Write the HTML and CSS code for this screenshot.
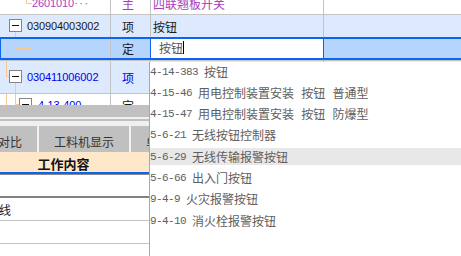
FILE: index.html
```html
<!DOCTYPE html>
<html>
<head>
<meta charset="utf-8">
<link rel="stylesheet" href="styles.css">
</head>
<body>
<div class="screen">
  <div class="grid">
    <div class="row r0">
      <div class="c code">
        <svg class="tree" width="32" height="22"><path d="M26.5 0V11.5H32" class="tl"/></svg>
        <span class="num purple">2601010<span class="dots">···</span></span>
      </div>
      <div class="c type purple">主</div>
      <div class="c name purple">四联翘板开关</div>
      <div class="c rest"></div>
    </div>
    <div class="row r1 alt">
      <div class="c code">
        <svg class="tree" width="27" height="22"><path d="M15.5 17V22" class="tl"/><rect x="9.5" y="4.5" width="12" height="12" class="box"/><path d="M12 10.5H19" class="mn"/></svg>
        <span class="num">030904003002</span>
      </div>
      <div class="c type">项</div>
      <div class="c name">按钮</div>
      <div class="c rest"></div>
    </div>
    <div class="row r2 sel">
      <div class="c code">
        <svg class="tree" width="31" height="19"><path d="M14.5 0V9.5H31" class="tl"/></svg>
      </div>
      <div class="c type">定</div>
      <div class="c edit"><span class="input-text">按钮</span><span class="caret"></span></div>
      <div class="c rest"></div>
    </div>
    <div class="row r3 alt">
      <div class="c code">
        <svg class="tree" width="27" height="32"><path d="M6.5 0V15.5H9" class="tl"/><path d="M15.5 22V32" class="tl"/><rect x="9.5" y="9.5" width="12" height="12" class="box"/><path d="M12 15.5H19" class="mn"/></svg>
        <span class="num blue">030411006002</span>
      </div>
      <div class="c type blue">项</div>
      <div class="c name"></div>
      <div class="c rest"></div>
    </div>
    <div class="row r4">
      <div class="c code">
        <svg class="tree" width="38" height="22"><path d="M6.5 0V22" class="tl"/><path d="M15.5 0V10.5H19" class="tl"/><rect x="19.5" y="4.5" width="12" height="12" class="box"/><path d="M22 10.5H29" class="mn"/></svg>
        <span class="num blue">4-13-400</span>
      </div>
      <div class="c type">定</div>
      <div class="c name"></div>
      <div class="c rest"></div>
    </div>
  </div>

  <div class="lower">
    <div class="band"></div>
    <div class="stripe-light thin"></div>
    <div class="stripe-gray"></div>
    <div class="stripe-light"></div>
    <div class="tabs">
      <div class="tab first">量价对比</div>
      <div class="tab-sep"></div>
      <div class="tab mid">工料机显示</div>
      <div class="tab-sep"></div>
      <div class="tab">单价构成</div>
    </div>
    <div class="hdr"><div class="hdr-cell">工作内容</div></div>
    <div class="hdr-line"></div>
    <div class="hdr-shadow"></div>
    <div class="blank-row"></div>
    <div class="dark-line"></div>
    <div class="wrow"><span class="clip">配线</span></div>
    <div class="wrow"></div>
  </div>

  <div class="popup">
    <div class="item"><span class="pc">4-14-383</span><span class="pn">按钮</span></div>
    <div class="item"><span class="pc">4-15-46</span><span class="pn">用电控制装置安装 按钮 普通型</span></div>
    <div class="item"><span class="pc">4-15-47</span><span class="pn">用电控制装置安装 按钮 防爆型</span></div>
    <div class="item"><span class="pc">5-6-21</span><span class="pn">无线按钮控制器</span></div>
    <div class="item hl"><span class="pc">5-6-29</span><span class="pn">无线传输报警按钮</span></div>
    <div class="item"><span class="pc">5-6-66</span><span class="pn">出入门按钮</span></div>
    <div class="item"><span class="pc">9-4-9</span><span class="pn">火灾报警按钮</span></div>
    <div class="item"><span class="pc">9-4-10</span><span class="pn">消火栓报警按钮</span></div>
  </div>
</div>
</body>
</html>
```

FILE: styles.css
```css
* { box-sizing: border-box; margin: 0; padding: 0; }

body {
  margin: 0;
  width: 461px;
  height: 256px;
  overflow: hidden;
  background: #ffffff;
  font-family: "Noto Sans CJK SC", sans-serif;
  font-size: 12px;
  color: #1a1a1a;
}

.screen {
  position: relative;
  width: 461px;
  height: 256px;
  overflow: hidden;
}

/* ---------- tree grid ---------- */
.grid {
  height: 105px;
  overflow: hidden;
  display: flex;
  flex-direction: column;
}

.row {
  display: flex;
  flex: none;
  border-bottom: 1px solid #c4c4c4;
  background: #ffffff;
}

.r0 { height: 23px; margin-top: -8px; }
.r1 { height: 23px; }
.r3 { height: 33px; }
.r4 { height: 23px; }
.alt { background: #dde9fc; }

.sel {
  height: 23px;
  margin-top: -1px;
  margin-bottom: 1px;
  background: #b5d5fd;
  border-top: 2px solid #0b64f2;
  border-bottom: 2px solid #0b64f2;
  border-left: 1px solid #0b64f2;
  box-shadow: 0 1px 0 #c4c4c4;
}

.c {
  display: flex;
  align-items: center;
  border-right: 1px solid #c4c4c4;
  overflow: hidden;
  white-space: nowrap;
  flex: none;
}

.code { width: 111px; }
.sel .code { width: 110px; }
.type { width: 40px; padding-left: 11px; }
.sel .type { width: 39px; border-right: none; }
.name { width: 173px; padding-left: 2px; }
.rest { flex: 1; border-right: none; }

.edit {
  width: 174px;
  background: #ffffff;
  border-left: 1px solid #0b64f2;
  border-right: 1px solid #0b64f2;
  padding-left: 8px;
  padding-bottom: 3px;
  color: #555555;
}

.caret {
  display: inline-block;
  width: 1px;
  height: 13px;
  background: #000000;
}

.tree { display: block; flex: none; align-self: stretch; }
.tl { fill: none; stroke: #f9c88c; stroke-width: 1; }
.box { fill: #ffffff; stroke: #858585; stroke-width: 1; }
.mn { stroke: #111111; stroke-width: 1; }

.num {
  font-family: "Liberation Sans", sans-serif;
  font-size: 11px;
  letter-spacing: -0.1px;
}
.dots { letter-spacing: 1.5px; }

.purple { color: #a83cc0; }
.blue { color: #0000ee; }

/* ---------- lower panel ---------- */
.lower {
  display: flex;
  flex-direction: column;
}

.band { height: 12px; background: #c0c0c0; }
.stripe-light { height: 5px; background: #f0f0f0; }
.stripe-light.thin { height: 2px; }
.stripe-gray { height: 2px; background: #c0c0c0; }

.tabs {
  display: flex;
  height: 26px;
  background: #c0c0c0;
  color: #333333;
}

.tab {
  display: flex;
  align-items: center;
  padding: 5px 15px 0;
  white-space: nowrap;
  flex: none;
}

.tab.first {
  width: 37px;
  justify-content: flex-end;
  overflow: hidden;
}

.tab.mid { width: 90px; }

.tab-sep {
  width: 2px;
  flex: none;
  background: #f2f2f2;
}

.hdr {
  display: flex;
  height: 20px;
  background: #ffe7c9;
}

.hdr-cell {
  width: 127px;
  display: flex;
  align-items: center;
  justify-content: center;
  padding-top: 2px;
  font-size: 13px;
  font-weight: bold;
  color: #111111;
}

.hdr-line { height: 2px; background: #0b64f2; }
.hdr-shadow { height: 1px; background: #8a8a8a; }
.blank-row { height: 21px; }
.dark-line { height: 2px; background: #808080; }

.wrow {
  height: 23px;
  border-bottom: 1px solid #c4c4c4;
  display: flex;
  align-items: center;
  overflow: hidden;
  white-space: nowrap;
}

.clip { margin-left: -13px; }

/* ---------- dropdown ---------- */
.popup {
  position: absolute;
  left: 149px;
  top: 62px;
  right: 0;
  bottom: 0;
  background: #ffffff;
  border-left: 1px solid #a8a8a8;
  padding-top: 1px;
  color: #5e5e5e;
}

.item {
  display: flex;
  align-items: center;
  gap: 6px;
  height: 17px;
  margin-bottom: 4.33px;
  white-space: nowrap;
}

.item.hl { background: #e8e8e8; }

.pc {
  font-family: "Liberation Mono", monospace;
  font-size: 11px;
  letter-spacing: -0.6px;
}

.pn {
  font-family: "Liberation Mono", "Noto Sans CJK SC", monospace;
  font-size: 12px;
}
```
